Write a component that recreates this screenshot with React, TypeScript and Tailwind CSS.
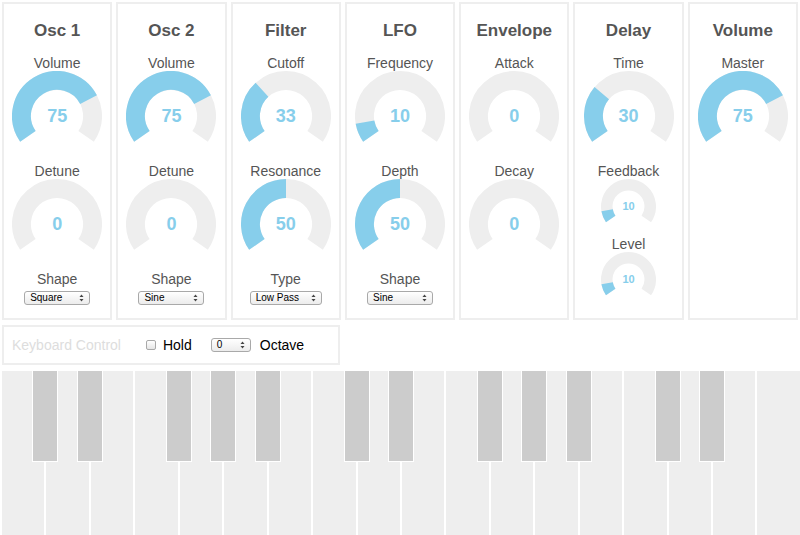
const FG = '#87CEEB';
const BG = '#EEEEEE';

function Knob({ value, size = 90 }: { value: number; size?: number }) {
  const c = size / 2;
  const line = c * 0.42;
  const rr = c - line / 2;
  const pt = (a: number) => {
    const t = (a * Math.PI) / 180;
    return `${(c + rr * Math.sin(t)).toFixed(2)} ${(c - rr * Math.cos(t)).toFixed(2)}`;
  };
  const arc = (a0: number, a1: number) =>
    `M ${pt(a0)} A ${rr} ${rr} 0 ${a1 - a0 > 180 ? 1 : 0} 1 ${pt(a1)}`;
  const end = -125 + (value / 100) * 250;
  const small = size < 70;

  return (
    <div className="relative shrink-0" style={{ width: size, height: size }}>
      <svg width={size} height={size} className="block">
        <path d={arc(-125, 125)} fill="none" stroke={BG} strokeWidth={line} />
        {value > 0 && <path d={arc(-125, end)} fill="none" stroke={FG} strokeWidth={line} />}
      </svg>
      <div
        className={
          small
            ? 'absolute inset-0 flex items-center justify-center text-[11px] font-bold text-[#87CEEB]'
            : 'absolute inset-0 flex items-center justify-center text-[18px] font-bold text-[#87CEEB]'
        }
      >
        {value}
      </div>
    </div>
  );
}

function Arrows() {
  return (
    <svg width="5" height="8" viewBox="0 0 5 8" className="block">
      <path d="M2.5 0.5 L4.5 3 L0.5 3 Z" fill="#444" />
      <path d="M2.5 7.5 L4.5 5 L0.5 5 Z" fill="#444" />
    </svg>
  );
}

function Select({ text, width }: { text: string; width: number }) {
  return (
    <div
      className="flex h-[14px] items-center justify-between rounded-[3px] border border-[#a9a9a9] bg-gradient-to-b from-white to-[#ececec] pl-[5px] pr-[5px] text-[10px] leading-none text-black"
      style={{ width }}
    >
      <span>{text}</span>
      <Arrows />
    </div>
  );
}

function Label({ children }: { children: string }) {
  return <div className="h-[16px] text-[14px] leading-[16px] text-[#555]">{children}</div>;
}

type Ctl = { label: string; value: number; small?: boolean };

function Panel({
  title,
  controls,
  select,
}: {
  title: string;
  controls: Ctl[];
  select?: { label: string; text: string; width: number };
}) {
  return (
    <div className="flex h-[318px] min-w-0 flex-1 flex-col items-center border-2 border-[#eee] pt-[17px]">
      <div className="h-[20px] text-[17px] font-bold leading-[20px] text-[#555]">{title}</div>
      <div className="mt-[14px] flex flex-col items-center">
        {controls.map((c) => (
          <div key={c.label} className="mb-[2px] flex flex-col items-center">
            <Label>{c.label}</Label>
            <Knob value={c.value} size={c.small ? 55 : 90} />
          </div>
        ))}
        {select && (
          <div className="flex flex-col items-center">
            <Label>{select.label}</Label>
            <div className="mt-[4px]">
              <Select text={select.text} width={select.width} />
            </div>
          </div>
        )}
      </div>
    </div>
  );
}

const whites = Array.from({ length: 18 }, (_, i) => i);
const hasBlack = (i: number) => [0, 1, 3, 4, 5].includes(i % 7) && i < 17;

export default function App() {
  return (
    <div className="h-[535px] w-[800px] overflow-hidden bg-white font-['Liberation_Sans',Arial,sans-serif]">
      <div className="flex gap-[4px] px-[2px] pt-[2px]">
        <Panel
          title="Osc 1"
          controls={[
            { label: 'Volume', value: 75 },
            { label: 'Detune', value: 0 },
          ]}
          select={{ label: 'Shape', text: 'Square', width: 66 }}
        />
        <Panel
          title="Osc 2"
          controls={[
            { label: 'Volume', value: 75 },
            { label: 'Detune', value: 0 },
          ]}
          select={{ label: 'Shape', text: 'Sine', width: 66 }}
        />
        <Panel
          title="Filter"
          controls={[
            { label: 'Cutoff', value: 33 },
            { label: 'Resonance', value: 50 },
          ]}
          select={{ label: 'Type', text: 'Low Pass', width: 72 }}
        />
        <Panel
          title="LFO"
          controls={[
            { label: 'Frequency', value: 10 },
            { label: 'Depth', value: 50 },
          ]}
          select={{ label: 'Shape', text: 'Sine', width: 66 }}
        />
        <Panel
          title="Envelope"
          controls={[
            { label: 'Attack', value: 0 },
            { label: 'Decay', value: 0 },
          ]}
        />
        <Panel
          title="Delay"
          controls={[
            { label: 'Time', value: 30 },
            { label: 'Feedback', value: 10, small: true },
            { label: 'Level', value: 10, small: true },
          ]}
        />
        <Panel title="Volume" controls={[{ label: 'Master', value: 75 }]} />
      </div>

      {/* keyboard control */}
      <div className="ml-[2px] mt-[5px] flex h-[40px] w-[338px] items-center border-2 border-[#eee] pl-[8px] text-[14px]">
        <span className="text-[#ddd]">Keyboard Control</span>
        <div className="ml-[25px] h-[10px] w-[10px] rounded-[2px] border border-[#a9a9a9] bg-gradient-to-b from-white to-[#e6e6e6]" />
        <span className="ml-[7px] text-black">Hold</span>
        <div className="ml-[19px]">
          <Select text="0" width={40} />
        </div>
        <span className="ml-[9px] text-black">Octave</span>
      </div>

      {/* keyboard */}
      <div className="mt-[6px] flex gap-[2px] pl-[2px]">
        {whites.map((i) => (
          <div key={i} className="relative h-[170px] flex-1 bg-[#eee]">
            {hasBlack(i) && (
              <div className="absolute -right-[14px] top-0 z-10 h-[91px] w-[26px] border-x border-b border-white bg-[#ccc]" />
            )}
          </div>
        ))}
      </div>
    </div>
  );
}
